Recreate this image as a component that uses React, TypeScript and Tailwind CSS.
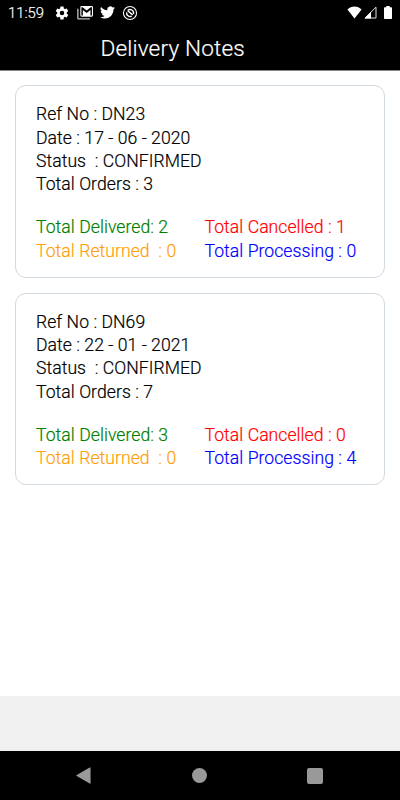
import type { ReactNode } from "react";

type DeliveryNote = {
  refNo: string;
  date: string;
  status: string;
  orders: number;
  delivered: number;
  cancelled: number;
  returned: number;
  processing: number;
};

const notes: DeliveryNote[] = [
  {
    refNo: "DN23",
    date: "17 - 06 - 2020",
    status: "CONFIRMED",
    orders: 3,
    delivered: 2,
    cancelled: 1,
    returned: 0,
    processing: 0,
  },
  {
    refNo: "DN69",
    date: "22 - 01 - 2021",
    status: "CONFIRMED",
    orders: 7,
    delivered: 3,
    cancelled: 0,
    returned: 0,
    processing: 4,
  },
];

function Icon({ className, children }: { className: string; children: ReactNode }) {
  return (
    <svg viewBox="0 0 24 24" fill="currentColor" className={className}>
      {children}
    </svg>
  );
}

function StatusBar() {
  return (
    <div className="flex h-[25px] items-center pl-2 pr-2">
      <span className="w-[46px] pt-px text-[14.8px] leading-none">11:59</span>
      <Icon className="h-4 w-4">
        <path d="M19.14 12.94c.04-.3.06-.61.06-.94 0-.32-.02-.64-.07-.94l2.03-1.58a.49.49 0 0 0 .12-.61l-1.92-3.32a.49.49 0 0 0-.59-.22l-2.39.96a7.03 7.03 0 0 0-1.62-.94l-.36-2.54a.48.48 0 0 0-.48-.41h-3.84a.48.48 0 0 0-.47.41l-.36 2.54c-.59.24-1.13.57-1.62.94l-2.39-.96a.48.48 0 0 0-.59.22L2.74 8.87a.48.48 0 0 0 .12.61l2.03 1.58c-.05.3-.09.63-.09.94s.02.64.07.94l-2.03 1.58a.49.49 0 0 0-.12.61l1.92 3.32c.12.22.37.29.59.22l2.39-.96c.5.38 1.03.7 1.62.94l.36 2.54c.05.24.24.41.48.41h3.84c.24 0 .44-.17.47-.41l.36-2.54c.59-.24 1.13-.56 1.62-.94l2.39.96c.22.08.47 0 .59-.22l1.92-3.32a.48.48 0 0 0-.12-.61l-2.01-1.58zM12 15.4A3.4 3.4 0 1 1 12 8.6a3.4 3.4 0 0 1 0 6.8z" />
      </Icon>
      <Icon className="ml-[7px] h-4 w-4">
        <path
          fillRule="evenodd"
          d="M7 1.5h15a2 2 0 0 1 2 2v12a2 2 0 0 1-2 2H7a2 2 0 0 1-2-2v-12a2 2 0 0 1 2-2zm-.4 1.7v12.6h2.2V7.4l5.7 4.6 5.7-4.6v8.4h2.2V3.2h-1.8l-6.1 5-6.1-5H6.6z"
        />
        <path d="M.3 5.5h2v14.2h17v2h-17a2 2 0 0 1-2-2V5.5z" opacity=".75" />
      </Icon>
      <Icon className="ml-[6.5px] h-[15px] w-[15px]">
        <path d="M23.95 4.57a10 10 0 0 1-2.82.77 4.96 4.96 0 0 0 2.16-2.72c-.95.55-2 .95-3.13 1.18a4.92 4.92 0 0 0-8.38 4.48C7.69 8.1 4.07 6.13 1.64 3.16a4.92 4.92 0 0 0 1.52 6.57 4.9 4.9 0 0 1-2.23-.61v.06a4.92 4.92 0 0 0 3.95 4.83 5 5 0 0 1-2.21.08 4.94 4.94 0 0 0 4.6 3.42A9.87 9.87 0 0 1 0 19.54a13.99 13.99 0 0 0 7.55 2.21c9.05 0 14-7.5 14-13.98 0-.21 0-.42-.02-.63a9.94 9.94 0 0 0 2.46-2.55z" />
      </Icon>
      <Icon className="ml-[7.5px] h-4 w-4">
        <circle cx="12" cy="12" r="9.8" fill="none" stroke="currentColor" strokeWidth="1.6" />
        <path
          d="M14.5 16.6A5.2 5.2 0 0 1 7 11M8.5 8.2a5.2 5.2 0 0 1 8.6 5.2M8.5 8.5l7.5 6.3"
          fill="none"
          stroke="currentColor"
          strokeWidth="2.1"
        />
      </Icon>
      <svg viewBox="0 0 15 13" className="ml-auto h-[13px] w-[15px]" fill="currentColor">
        <path d="M7.5 12.5L.4 3.5C2.4 1.5 4.8.5 7.5.5s5.1 1 7.1 3z" />
      </svg>
      <svg viewBox="0 0 13 13" className="ml-0.5 h-[13px] w-[13px]">
        <path d="M1 12L12 1.2V12z" fill="none" stroke="#ddd" strokeWidth="1" />
        <path d="M.5 12.5l6.5-6.5v6.5z" fill="#fff" />
      </svg>
      <svg viewBox="0 0 8 13" className="ml-[7px] h-[13px] w-2" fill="currentColor">
        <path d="M2.3 0h3.4v1.2h1.6q.7 0 .7.7v10.4q0 .7-.7.7H.7q-.7 0-.7-.7V1.9q0-.7.7-.7h1.6z" />
      </svg>
    </div>
  );
}

function NoteCard({ note }: { note: DeliveryNote }) {
  return (
    <div className="h-[192.5px] rounded-[11px] border border-[#d2dae1] bg-white px-5 pt-[17.3px] text-[17.6px] leading-[23.3px] tracking-[0.05px] whitespace-pre">
      <p>Ref No : {note.refNo}</p>
      <p>Date : {note.date}</p>
      <p>{"Status  : "}{note.status}</p>
      <p>Total Orders : {note.orders}</p>
      <div className="mt-5 grid grid-cols-[168.5px_1fr]">
        <p className="text-[#008000]">Total Delivered: {note.delivered}</p>
        <p className="text-[#ff0000]">Total Cancelled : {note.cancelled}</p>
        <p className="text-[#ff9f0a]">{"Total Returned  : "}{note.returned}</p>
        <p className="text-[#0000ff]">Total Processing : {note.processing}</p>
      </div>
    </div>
  );
}

export default function App() {
  return (
    <div className="flex h-[800px] w-[400px] flex-col overflow-hidden bg-[#f0f0f0] font-['Roboto',sans-serif] font-light text-black [-webkit-text-stroke:0.2px]">
      <header className="h-[70px] shrink-0 bg-black text-white">
        <StatusBar />
        <h1 className="pl-[100.5px] pt-[10px] text-[22.6px] leading-[28px] tracking-[0.15px]">Delivery Notes</h1>
      </header>

      <main className="flex h-[626px] shrink-0 flex-col gap-[15px] border-t border-[#888] bg-white px-[15px] pt-[14px]">
        {notes.map((note) => (
          <NoteCard key={note.refNo} note={note} />
        ))}
      </main>

      <nav className="mt-auto flex h-[49px] items-center justify-between bg-black pl-[76px] pr-[77px] text-[#999]">
        <svg viewBox="0 0 16 18" className="h-[17px] w-[15px]" fill="currentColor">
          <path d="M15.5.8v16.4q0 .8-.9.3L.8 9.6q-1-.6 0-1.2L14.6.5q.9-.4.9.3z" />
        </svg>
        <span className="h-[15px] w-[15px] rounded-full bg-[#999]" />
        <span className="h-4 w-4 rounded-[2px] bg-[#999]" />
      </nav>
    </div>
  );
}
